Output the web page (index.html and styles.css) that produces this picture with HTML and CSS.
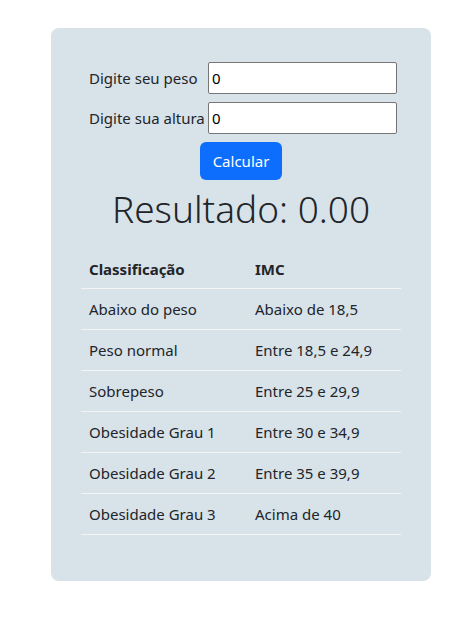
FILE: index.html
```html
<!DOCTYPE html>
<html lang="pt-BR">
<head>
<meta charset="utf-8">
<title>IMC</title>
<link rel="stylesheet" href="styles.css">
</head>
<body>
<div class="page">
  <div class="card">
    <form class="form">
      <div class="row">
        <label class="label" for="peso">Digite seu peso</label>
        <input class="input" id="peso" type="text" value="0">
      </div>
      <div class="row">
        <label class="label" for="altura">Digite sua altura</label>
        <input class="input" id="altura" type="text" value="0">
      </div>
      <button class="btn" type="button">Calcular</button>
    </form>
    <h1 class="result">Resultado: 0.00</h1>
    <table class="table">
      <thead>
        <tr><th class="c1">Classificação</th><th>IMC</th></tr>
      </thead>
      <tbody>
        <tr><td>Abaixo do peso</td><td>Abaixo de 18,5</td></tr>
        <tr><td>Peso normal</td><td>Entre 18,5 e 24,9</td></tr>
        <tr><td>Sobrepeso</td><td>Entre 25 e 29,9</td></tr>
        <tr><td>Obesidade Grau 1</td><td>Entre 30 e 34,9</td></tr>
        <tr><td>Obesidade Grau 2</td><td>Entre 35 e 39,9</td></tr>
        <tr><td>Obesidade Grau 3</td><td>Acima de 40</td></tr>
      </tbody>
    </table>
  </div>
</div>
</body>
</html>
```
FILE: styles.css
```css
* { box-sizing: border-box; }
html, body { margin: 0; padding: 0; background: #fff; }
body {
  font-family: "Noto Sans", "Open Sans", sans-serif;
  font-size: 15px;
  color: #212529;
}
.page {
  padding-top: 28px;
  padding-left: 51px;
}
.card {
  width: 380px;
  height: 553px;
  background: #d8e2e9;
  border-radius: 8px;
  padding: 34px 30px 0 30px;
  display: flex;
  flex-direction: column;
  align-items: center;
}
.form {
  align-self: stretch;
  display: flex;
  flex-direction: column;
  align-items: center;
  gap: 8px;
}
.row {
  align-self: stretch;
  display: flex;
  align-items: center;
  padding-left: 8px;
}
.label {
  width: 119px;
  line-height: 24px;
  white-space: nowrap;
  color: #212529;
}
.input {
  width: 189px;
  height: 32px;
  border: 1px solid #767676;
  border-radius: 2px;
  padding: 0 3px;
  font: inherit;
  font-size: 15px;
  color: #000;
  background: #fff;
}
.btn {
  height: 38px;
  width: 82px;
  background: #0d6efd;
  color: #fff;
  border: none;
  border-radius: 6px;
  font: inherit;
  font-size: 15px;
  padding: 0;
}
.result {
  margin: 6px 0 0 0;
  font-weight: 300;
  font-size: 37px;
  line-height: 46px;
  color: #212529;
}
.table {
  margin-top: 18px;
  width: 320px;
  border-collapse: collapse;
}
.table th, .table td {
  text-align: left;
  padding: 0 8px;
  height: 41px;
  border-bottom: 1px solid #f2f4f6;
  white-space: nowrap;
}
.table th { font-weight: 700; height: 38px; }
.table .c1 { width: 166px; }
```
